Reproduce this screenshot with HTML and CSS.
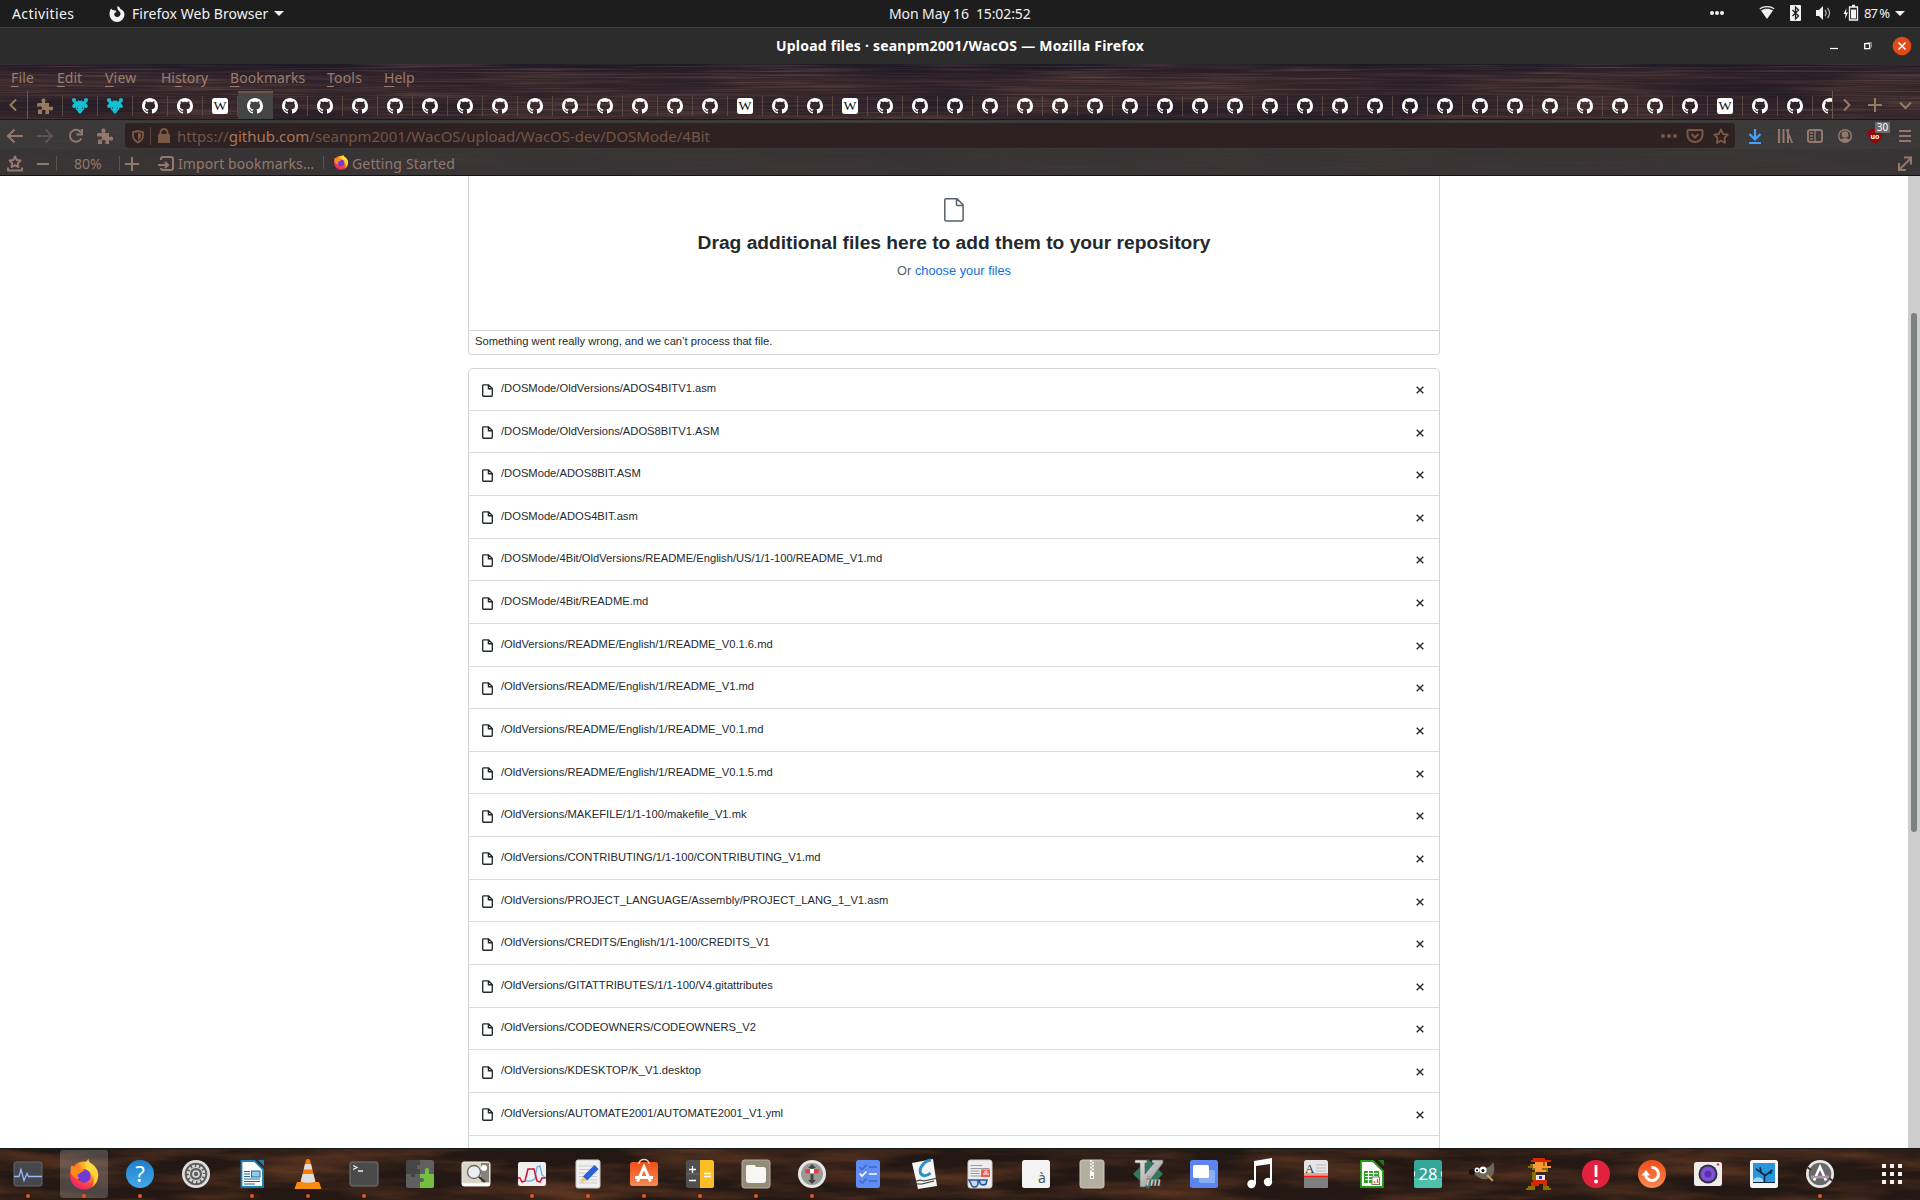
FILE: index.html
```html
<!DOCTYPE html>
<html lang="en">
<head>
<meta charset="utf-8">
<title>Upload files · seanpm2001/WacOS</title>
<link rel="stylesheet" href="styles.css">
</head>
<body>
<svg class="defs" width="0" height="0">
  <defs>
    <symbol id="gh" viewBox="0 0 16 16"><path fill="#fff" d="M8 0C3.58 0 0 3.58 0 8c0 3.54 2.29 6.53 5.47 7.59.4.07.55-.17.55-.38 0-.19-.01-.82-.01-1.49-2.01.37-2.53-.49-2.69-.94-.09-.23-.48-.94-.82-1.13-.28-.15-.68-.52-.01-.53.63-.01 1.08.58 1.23.82.72 1.21 1.87.87 2.33.66.07-.52.28-.87.51-1.07-1.78-.2-3.64-.89-3.64-3.95 0-.87.31-1.59.82-2.15-.08-.2-.36-1.02.08-2.12 0 0 .67-.21 2.2.82.64-.18 1.32-.27 2-.27.68 0 1.36.09 2 .27 1.53-1.04 2.2-.82 2.2-.82.44 1.1.16 1.92.08 2.12.51.56.82 1.27.82 2.15 0 3.07-1.87 3.75-3.65 3.95.29.25.54.73.54 1.48 0 1.07-.01 1.93-.01 2.2 0 .21.15.46.55.38A8.013 8.013 0 0016 8c0-4.42-3.58-8-8-8z"/></symbol>
    <symbol id="wk" viewBox="0 0 16 16"><rect width="16" height="16" rx="2.500" fill="#fff"/><text x="8" y="12.400" text-anchor="middle" font-style="normal" font-family="Liberation Serif, serif" font-size="13" textLength="13" lengthAdjust="spacingAndGlyphs" fill="#111">W</text></symbol>
    <symbol id="pz" viewBox="0 0 16 16"><path fill="currentColor" d="M1 5h4V3.800a2 2 0 1 1 3 0V5h4v4h1a2 2 0 1 1 0 3h-1v4H8.400v-1.500a1.900 1.900 0 1 0-3.300 0V16H1v-4.500h1.500a1.700 1.700 0 1 0 0-3H0V6z"/></symbol>
    <symbol id="cy" viewBox="0 0 16 16"><path fill="#13c0d3" d="M0 1l2-1 2 1-.2 2L6 3.500 6.500 2 8 3l1.500-1 .5 1.500L12.200 3 12 1l2-1 2 1-.3 2.500-2 1.500 1.300 1.500L16 8l-1 2-2.500-.5-.5 2.200-1.500 1-.5 1.300L8 16l-2-2-.5-1.300-1.500-1-.5-2.200L1 10 0 8l1-1.500L2.300 5l-2-1.500z"/><path fill="#3a262a" d="M6.200 8.500l-1.400 2.200.8.400zM9.800 8.500l1.400 2.200-.8.400z"/></symbol>
    <symbol id="ff" viewBox="0 0 32 32">
      <circle cx="16" cy="17.500" r="14" fill="url(#ffo)"/>
      <path fill="#ffd83a" d="M17 9c0-4 1.500-6.500 3.500-8 .3 3 3 5 4.500 7 3.500 1.500 5.500 5.500 5.300 10-.3 5-3 9-6.800 11.500 3-4 3-9 1-12.500C23 13 19 13 17 9z" opacity=".85"/>
      <circle cx="16" cy="18" r="6.800" fill="#7339d8"/>
      <path fill="#ff8a1c" d="M3 8c1.500-.5 2.500 0 3.500 1.500L8 7.500c1 1.500 2 2.500 4.500 2.800 1.500.3 2.500 1 4 2.700-3 0-4 2.500-6 3-1.500.5-1 3 1 4.500-4 1-8-3-9-6z"/>
    </symbol>
    <symbol id="file" viewBox="0 0 11 13"><path fill="none" stroke="currentColor" stroke-width="1.350" d="M1.500.8h5.100l3.700 3.700v6.900a.8.8 0 0 1-.8.8h-8a.8.8 0 0 1-.8-.8V1.600a.8.8 0 0 1 .8-.8zM6.400 1v3.700h3.700"/></symbol>
    <symbol id="x" viewBox="0 0 8 8"><path fill="none" stroke="#24292e" stroke-width="1.400" d="M.7.7l6.600 6.600M7.300.7L.7 7.300"/></symbol>
    <radialGradient id="ffo" cx=".75" cy=".15" r="1"><stop offset="0" stop-color="#fff14a"/><stop offset=".35" stop-color="#ffa51f"/><stop offset=".65" stop-color="#ff4a3c"/><stop offset="1" stop-color="#e6167c"/></radialGradient>
    <linearGradient id="blu" x2="0" y2="1"><stop offset="0" stop-color="#1c7fcd"/><stop offset="1" stop-color="#45a8e8"/></linearGradient>
    <linearGradient id="org" x2="0" y2="1"><stop offset="0" stop-color="#f04e1a"/><stop offset="1" stop-color="#f88a50"/></linearGradient>
    <linearGradient id="met" x2="1" y2="1"><stop offset="0" stop-color="#e8e8e8"/><stop offset="1" stop-color="#8d8d8d"/></linearGradient>
    <filter id="grain" x="0" y="0" width="100%" height="100%" color-interpolation-filters="sRGB"><feTurbulence type="fractalNoise" baseFrequency=".008 .6" numOctaves="3" seed="4"/><feColorMatrix values="0 0 0 0 .58  0 0 0 0 .42  0 0 0 0 .4  .9 0 0 0 -.37"/></filter>
    <filter id="stain" x="0" y="0" width="100%" height="100%" color-interpolation-filters="sRGB"><feTurbulence type="fractalNoise" baseFrequency=".006 .03" numOctaves="2" seed="9"/><feColorMatrix values="0 0 0 0 .1  0 0 0 0 .08  0 0 0 0 .13  1.800 0 0 0 -.75"/></filter>
    <filter id="plank" x="0" y="0" width="100%" height="100%" color-interpolation-filters="sRGB"><feTurbulence type="fractalNoise" baseFrequency=".008 .06" numOctaves="4" seed="12"/><feColorMatrix values="0 0 0 0 .36  0 0 0 0 .21  0 0 0 0 .13  2 0 0 0 -.75"/></filter>
  </defs>
</svg>

<header class="topbar">
  <span class="activities">Activities</span>
  <svg class="appicon" width="16" height="16" viewBox="0 0 16 16"><path fill="#f2f2f2" d="M8.500 0c2 .8 2.500 2 3 3 2.500 1 4 3.200 4 5.500a7.500 7.500 0 0 1-15 0C.5 6 1 4 2.200 2.500L3.500 4 6.500 4.500 7.500 6 5.500 7c-.8 2 .8 4 2.700 4 2.200 0 3.500-1.800 3.300-3.700C11.300 5 7.500 4.500 8.500 0z"/></svg>
  <span class="appname">Firefox Web Browser</span>
  <i class="caret"></i>
  <span class="clock">Mon May 16&nbsp; 15:02:52</span>
  <svg class="tray" width="230" height="27" viewBox="1690 0 230 27">
    <g fill="#f2f2f2"><circle cx="1712" cy="13" r="2"/><circle cx="1717" cy="13" r="2"/><circle cx="1722" cy="13" r="2"/>
    <path d="M1761 10.500l6 8.500 6-8.500c-3.500-2.500-8.500-2.500-12 0z"/><rect x="1790" y="5" width="11" height="16" rx="1"/>
    <path d="M1816 10h3l4-4v14l-4-4h-3zM1846.500 8l-3 6h2l-.5 5 3-6.500h-2z"/><rect x="1851" y="9.500" width="5" height="9"/>
    <path d="M1895 11h10l-5 5z"/></g>
    <g fill="none" stroke="#f2f2f2" stroke-width="1.300"><path d="M1759.800 8.800c4-3 10.400-3 14.400 0"/><path d="M1849.500 7h8v13h-8zM1852 5.500h3"/><path stroke="#aaa" d="M1825 10c1.500 2 1.500 4 0 6M1827.500 8c2.500 3 2.500 7 0 10"/><path stroke="#1d1d1d" d="M1792.500 10l6 6-3 3V7l3 3-6 6"/></g>
    <text x="1864" y="18" fill="#f2f2f2" font-size="13" textLength="26">87 %</text>
  </svg>
</header>

<div class="titlebar">
  <span class="wintitle">Upload files · seanpm2001/WacOS — Mozilla Firefox</span>
  <svg class="winbtns" width="100" height="36" viewBox="1820 27 100 36"><path stroke="#fff" stroke-width="1.200" d="M1830 47.500h8"/><path fill="none" stroke="#fff" stroke-width="1.300" d="M1864.700 42.700h5v5h-5z"/><path fill="none" stroke="#888" d="M1866.500 41.500h5v5"/><circle cx="1902" cy="45" r="9.300" fill="#e24b18"/><path stroke="#fff" stroke-width="1.600" d="M1898.500 41.500l7 7M1905.500 41.500l-7 7"/></svg>
</div>

<div class="chrome">
  <svg class="wood" width="1920" height="113"><rect width="1920" height="113" filter="url(#grain)"/><rect width="1920" height="113" filter="url(#stain)"/></svg>
  <nav class="menubar">
    <span class="m1"><u>F</u>ile</span><span class="m2"><u>E</u>dit</span><span class="m3"><u>V</u>iew</span><span class="m4">Hi<u>s</u>tory</span><span class="m5"><u>B</u>ookmarks</span><span class="m6"><u>T</u>ools</span><span class="m7"><u>H</u>elp</span>
  </nav>
  <div class="tabstrip">
    <svg class="scroll-l" width="27" height="28" viewBox="0 0 27 28"><path class="ln" d="M16 8.500l-5.500 5.500 5.500 5.500"/></svg>
    <div class="tabs">
      <i class="tab"><svg><use href="#pz"/></svg></i>
      <i class="tab"><svg><use href="#cy"/></svg></i>
      <i class="tab"><svg><use href="#cy"/></svg></i>
      <i class="tab"><svg><use href="#gh"/></svg></i>
      <i class="tab"><svg><use href="#gh"/></svg></i>
      <i class="tab"><svg><use href="#wk"/></svg></i>
      <i class="tab active"><svg><use href="#gh"/></svg></i>
      <i class="tab"><svg><use href="#gh"/></svg></i>
      <i class="tab"><svg><use href="#gh"/></svg></i>
      <i class="tab"><svg><use href="#gh"/></svg></i>
      <i class="tab"><svg><use href="#gh"/></svg></i>
      <i class="tab"><svg><use href="#gh"/></svg></i>
      <i class="tab"><svg><use href="#gh"/></svg></i>
      <i class="tab"><svg><use href="#gh"/></svg></i>
      <i class="tab"><svg><use href="#gh"/></svg></i>
      <i class="tab"><svg><use href="#gh"/></svg></i>
      <i class="tab"><svg><use href="#gh"/></svg></i>
      <i class="tab"><svg><use href="#gh"/></svg></i>
      <i class="tab"><svg><use href="#gh"/></svg></i>
      <i class="tab"><svg><use href="#gh"/></svg></i>
      <i class="tab"><svg><use href="#wk"/></svg></i>
      <i class="tab"><svg><use href="#gh"/></svg></i>
      <i class="tab"><svg><use href="#gh"/></svg></i>
      <i class="tab"><svg><use href="#wk"/></svg></i>
      <i class="tab"><svg><use href="#gh"/></svg></i>
      <i class="tab"><svg><use href="#gh"/></svg></i>
      <i class="tab"><svg><use href="#gh"/></svg></i>
      <i class="tab"><svg><use href="#gh"/></svg></i>
      <i class="tab"><svg><use href="#gh"/></svg></i>
      <i class="tab"><svg><use href="#gh"/></svg></i>
      <i class="tab"><svg><use href="#gh"/></svg></i>
      <i class="tab"><svg><use href="#gh"/></svg></i>
      <i class="tab"><svg><use href="#gh"/></svg></i>
      <i class="tab"><svg><use href="#gh"/></svg></i>
      <i class="tab"><svg><use href="#gh"/></svg></i>
      <i class="tab"><svg><use href="#gh"/></svg></i>
      <i class="tab"><svg><use href="#gh"/></svg></i>
      <i class="tab"><svg><use href="#gh"/></svg></i>
      <i class="tab"><svg><use href="#gh"/></svg></i>
      <i class="tab"><svg><use href="#gh"/></svg></i>
      <i class="tab"><svg><use href="#gh"/></svg></i>
      <i class="tab"><svg><use href="#gh"/></svg></i>
      <i class="tab"><svg><use href="#gh"/></svg></i>
      <i class="tab"><svg><use href="#gh"/></svg></i>
      <i class="tab"><svg><use href="#gh"/></svg></i>
      <i class="tab"><svg><use href="#gh"/></svg></i>
      <i class="tab"><svg><use href="#gh"/></svg></i>
      <i class="tab"><svg><use href="#gh"/></svg></i>
      <i class="tab"><svg><use href="#wk"/></svg></i>
      <i class="tab"><svg><use href="#gh"/></svg></i>
      <i class="tab"><svg><use href="#gh"/></svg></i>
      <i class="tab"><svg><use href="#gh"/></svg></i>
    </div>
    <svg width="87" height="28" viewBox="0 0 87 28"><path class="ln" d="M11 8.500l5.500 5.500-5.500 5.500M42 7v14M35 14h14M67 11.500l5.500 5.500 5.500-5.500"/></svg>
  </div>
  <div class="navbar">
    <svg width="125" height="30" viewBox="0 0 125 30"><path class="lp" d="M8 16h15M14.500 9.500L8 16l6.500 6.500"/><path class="lp dim" d="M37 16h15M45.500 9.500L52 16l-6.500 6.500"/><path class="lp" d="M81 12.500a6 6 0 1 0 .3 6M82 9v5.500h-5.500"/><svg class="pink" x="97" y="8" width="16" height="16"><use href="#pz"/></svg></svg>
    <div class="urlbar">
      <svg width="50" height="24" viewBox="125 124 50 24"><path fill="none" stroke="#7a5947" stroke-width="1.800" d="M138 131l-5 1.200v3.300c0 3 2 5.500 5 6.800 3-1.300 5-3.800 5-6.800v-3.300z"/><path fill="#7a5947" d="M138 133v7c2-1 3-2.500 3-4.500v-2z"/><path stroke="#5b4038" d="M150.500 127v18"/><rect x="158" y="134" width="12" height="9" rx="1" fill="#7a5947"/><path fill="none" stroke="#7a5947" stroke-width="2" d="M160.500 135v-2.500a3.500 3.500 0 0 1 7 0v2.500"/></svg>
      <span class="url">https://<b>github.com</b>/seanpm2001/WacOS/upload/WacOS-dev/DOSMode/4Bit</span>
      <svg width="80" height="24" viewBox="1655 124 80 24"><g fill="#7a5947"><circle cx="1663" cy="136" r="2"/><circle cx="1669" cy="136" r="2"/><circle cx="1675" cy="136" r="2"/></g><g fill="none" stroke="#7a5947" stroke-width="2"><path d="M1688.500 130h13a1 1 0 0 1 1 1v4a7.500 7 0 0 1-15 0v-4a1 1 0 0 1 1-1z"/><path d="M1691.500 134l3.500 3.500 3.500-3.500"/><path stroke-linejoin="round" stroke-width="1.800" d="M1721 129.500l2.100 4.500 4.700.6-3.400 3.400.8 4.900-4.200-2.300-4.200 2.300.8-4.900-3.400-3.400 4.700-.6z"/></g></svg>
    </div>
    <svg width="185" height="30" viewBox="1735 120 185 30">
      <path fill="none" stroke="#45a1ff" stroke-width="2.200" d="M1755 129v10.500M1749.500 134l5.500 5.500 5.500-5.500M1749 143h12"/>
      <g fill="none" stroke="#94786c" stroke-width="2"><path d="M1779 129v14M1783.500 129v14M1788 129v14" /><path stroke-width="1.700" d="M1786.500 129.500l5.800 13.500"/><rect x="1808" y="130" width="14" height="12" rx="2"/><path d="M1815 130v12M1810 133h3M1810 136h3M1810 139h3" stroke-width="1.400"/><circle cx="1845" cy="136" r="6.300" stroke-width="1.500"/><path d="M1899 131h12M1899 136h12M1899 141h12"/></g>
      <circle cx="1845" cy="134.500" r="3.300" fill="#94786c"/><path fill="#94786c" d="M1840 140c2-2.500 8-2.500 10 0-2.500 3-7.500 3-10 0z"/>
      <path fill="#8a0a10" d="M1875 128l7 2v5c0 4-3 7-7 9-4-2-7-5-7-9v-5z"/><text x="1875" y="138.500" fill="#fff" font-size="7" font-weight="700" text-anchor="middle">uo</text>
      <rect x="1875" y="122" width="15" height="11" rx="1" fill="#6d6d6d"/><text x="1882.500" y="131.300" fill="#fff" font-size="10" text-anchor="middle">30</text>
    </svg>
  </div>
  <div class="bookmarks">
    <svg width="66" height="27" viewBox="0 149 66 27"><path class="lp" stroke-linejoin="round" d="M15 156.500l1.700 3.500 3.800.5-2.700 2.700.6 3.800-3.400-1.800-3.400 1.800.6-3.800-2.700-2.700 3.800-.5zM8 167.500v3h14v-3M37 164h12"/><path stroke="#5e514d" d="M56.500 156v15"/></svg>
    <span class="zoom">80%</span>
    <svg width="66" height="27" viewBox="112 149 66 27"><path stroke="#5e514d" d="M119.500 156v15"/><path class="lp" d="M125 164h14M132 157v14M161 160v-1a2 2 0 0 1 2-2h8a2 2 0 0 1 2 2v9a2 2 0 0 1-2 2h-8a2 2 0 0 1-2-2M158 165h10M165 162l3 3-3 3"/></svg>
    <span class="imp">Import bookmarks…</span>
    <i class="bsep"></i>
    <svg class="bff" width="16" height="16"><use href="#ff"/></svg>
    <span class="get">Getting Started</span>
    <svg class="expand" width="30" height="27" viewBox="1890 149 30 27"><path class="lp" d="M1899 170l12-12M1904 157.500h7v7M1899 163v7h7"/></svg>
  </div>
</div>

<main class="viewport">
  <div class="page">
    <section class="drop">
      <svg class="bigfile" width="20" height="24" viewBox="0 0 20 24"><path fill="none" stroke="#586069" stroke-width="1.500" d="M2 .8h11l6.100 6.100v14.900a1.300 1.300 0 0 1-1.300 1.300H2A1.300 1.300 0 0 1 .8 21.800V2A1.300 1.300 0 0 1 2 .8zM12.500 1v5.300a1.200 1.200 0 0 0 1.200 1.200H19"/></svg>
      <h2>Drag additional files here to add them to your repository</h2>
      <p>Or <a>choose your files</a></p>
    </section>
    <div class="error">Something went really wrong, and we can’t process that file.</div>
    <div class="files">
      <div class="row"><svg class="fi"><use href="#file"/></svg><span>/DOSMode/OldVersions/ADOS4BITV1.asm</span><svg class="rm"><use href="#x"/></svg></div>
      <div class="row"><svg class="fi"><use href="#file"/></svg><span>/DOSMode/OldVersions/ADOS8BITV1.ASM</span><svg class="rm"><use href="#x"/></svg></div>
      <div class="row"><svg class="fi"><use href="#file"/></svg><span>/DOSMode/ADOS8BIT.ASM</span><svg class="rm"><use href="#x"/></svg></div>
      <div class="row"><svg class="fi"><use href="#file"/></svg><span>/DOSMode/ADOS4BIT.asm</span><svg class="rm"><use href="#x"/></svg></div>
      <div class="row"><svg class="fi"><use href="#file"/></svg><span>/DOSMode/4Bit/OldVersions/README/English/US/1/1-100/README_V1.md</span><svg class="rm"><use href="#x"/></svg></div>
      <div class="row"><svg class="fi"><use href="#file"/></svg><span>/DOSMode/4Bit/README.md</span><svg class="rm"><use href="#x"/></svg></div>
      <div class="row"><svg class="fi"><use href="#file"/></svg><span>/OldVersions/README/English/1/README_V0.1.6.md</span><svg class="rm"><use href="#x"/></svg></div>
      <div class="row"><svg class="fi"><use href="#file"/></svg><span>/OldVersions/README/English/1/README_V1.md</span><svg class="rm"><use href="#x"/></svg></div>
      <div class="row"><svg class="fi"><use href="#file"/></svg><span>/OldVersions/README/English/1/README_V0.1.md</span><svg class="rm"><use href="#x"/></svg></div>
      <div class="row"><svg class="fi"><use href="#file"/></svg><span>/OldVersions/README/English/1/README_V0.1.5.md</span><svg class="rm"><use href="#x"/></svg></div>
      <div class="row"><svg class="fi"><use href="#file"/></svg><span>/OldVersions/MAKEFILE/1/1-100/makefile_V1.mk</span><svg class="rm"><use href="#x"/></svg></div>
      <div class="row"><svg class="fi"><use href="#file"/></svg><span>/OldVersions/CONTRIBUTING/1/1-100/CONTRIBUTING_V1.md</span><svg class="rm"><use href="#x"/></svg></div>
      <div class="row"><svg class="fi"><use href="#file"/></svg><span>/OldVersions/PROJECT_LANGUAGE/Assembly/PROJECT_LANG_1_V1.asm</span><svg class="rm"><use href="#x"/></svg></div>
      <div class="row"><svg class="fi"><use href="#file"/></svg><span>/OldVersions/CREDITS/English/1/1-100/CREDITS_V1</span><svg class="rm"><use href="#x"/></svg></div>
      <div class="row"><svg class="fi"><use href="#file"/></svg><span>/OldVersions/GITATTRIBUTES/1/1-100/V4.gitattributes</span><svg class="rm"><use href="#x"/></svg></div>
      <div class="row"><svg class="fi"><use href="#file"/></svg><span>/OldVersions/CODEOWNERS/CODEOWNERS_V2</span><svg class="rm"><use href="#x"/></svg></div>
      <div class="row"><svg class="fi"><use href="#file"/></svg><span>/OldVersions/KDESKTOP/K_V1.desktop</span><svg class="rm"><use href="#x"/></svg></div>
      <div class="row"><svg class="fi"><use href="#file"/></svg><span>/OldVersions/AUTOMATE2001/AUTOMATE2001_V1.yml</span><svg class="rm"><use href="#x"/></svg></div>
      <div class="row"></div>
    </div>
  </div>
  <div class="scrollbar"><i class="thumb"></i></div>
</main>

<footer class="dock">
  <svg class="wood" width="1920" height="52"><rect width="1920" height="52" filter="url(#plank)"/></svg>
  <i class="app run"><svg viewBox="0 0 32 32"><rect x="2" y="4" width="28" height="24" rx="2" fill="#45474c" stroke="#666"/><path d="M2 18.500h5l2-7 3 11 3-7 1.500 3H30" fill="none" stroke="#9db6ff" stroke-width="1.300"/></svg></i>
  <i class="app run focus"><svg viewBox="0 0 32 32"><use href="#ff"/></svg></i>
  <i class="app run"><svg viewBox="0 0 32 32"><circle cx="16" cy="16" r="14" fill="url(#blu)"/><text x="16" y="23.500" text-anchor="middle" font-size="22" fill="#fff">?</text></svg></i>
  <i class="app"><svg viewBox="0 0 32 32"><circle cx="16" cy="16" r="14" fill="#dedede"/><circle cx="16" cy="16" r="11.300" fill="#5e5e5e"/><circle cx="16" cy="16" r="8" fill="none" stroke="#ddd" stroke-width="2.500" stroke-dasharray="2.600 1.600"/><circle cx="16" cy="16" r="6.500" fill="#5e5e5e" stroke="#ddd"/><circle cx="16" cy="16" r="3" fill="none" stroke="#ddd" stroke-width="1.600"/></svg></i>
  <i class="app run"><svg viewBox="0 0 32 32"><path fill="#fff" stroke="#1b80b5" stroke-width="1.800" d="M5.500 3h13L27 11.500V29H5.500z"/><path fill="#1b80b5" d="M22 2h6v6z"/><path stroke="#156a98" stroke-width="1.200" d="M8 13.500h6M8 16h6M8 18.500h6M8 21h16M8 23.500h16M8 26h11"/><rect x="15.500" y="13" width="8.500" height="6" fill="#8ecbe8" stroke="#156a98"/></svg></i>
  <i class="app run"><svg viewBox="0 0 32 32"><path fill="#f78d0f" d="M5 24h22l2.500 7h-27z"/><path fill="#fb7a06" d="M14 2c.5-1.500 3.500-1.500 4 0l5.500 22c-2 2-13 2-15 0z"/><path fill="#dedede" d="M13 6h6l1.300 5.500h-8.600zM10.600 16h10.800l1.900 7.500c-3 1.700-11.600 1.700-14.600 0z"/></svg></i>
  <i class="app run"><svg viewBox="0 0 32 32"><rect x="2" y="4" width="28" height="24" rx="2" fill="#4a4a4a" stroke="#777"/><path d="M5 7.500l4 2-4 2M10 13h5" fill="none" stroke="#eee" stroke-width="1.300"/></svg></i>
  <i class="app"><svg viewBox="0 0 32 32"><rect x="2" y="2" width="28" height="28" rx="2.500" fill="#5f5f5f"/><path fill="#464646" d="M2 4.500A2.500 2.500 0 0 1 4.500 2H16v5h-3v4h3v5h-5v3H7v-3H2z"/><path fill="#73bf3e" d="M16 16h5v-4a2 2 0 0 1 4 0v4h5v11.500a2.500 2.500 0 0 1-2.500 2.500H16v-6h2a2 2 0 0 0 0-4h-2z"/></svg></i>
  <i class="app"><svg viewBox="0 0 32 32"><rect x="2" y="4" width="28" height="24" rx="2" fill="#d9d6c8" stroke="#efeee6"/><path fill="#85837a" d="M21 5h8v19h-8z"/><circle cx="14" cy="14" r="6.500" fill="#eee" stroke="#666" stroke-width="1.300"/><path stroke="#333" stroke-width="2.200" d="M19 19l6 5"/><circle cx="24" cy="10" r="3" fill="#fff"/><path stroke="#fff" stroke-width="2.500" d="M2 26.500h28"/></svg></i>
  <i class="app run"><svg viewBox="0 0 32 32"><rect x="2" y="4" width="28" height="24" rx="2" fill="#efefef"/><path fill="none" stroke="#71b8ea" stroke-width="1.500" d="M10 23h5l4-2 2-12 3-1 2 9 3 2"/><path fill="none" stroke="#cf1030" stroke-width="1.500" d="M2 20h2l2 4 3-1 3-12h6l3 12 3 1 2-4h4"/></svg></i>
  <i class="app run"><svg viewBox="0 0 32 32"><rect x="4" y="2" width="24" height="28" rx="2" fill="#f0f0f0" stroke="#ccc"/><path stroke="#ccc" d="M7 8h18M7 11.500h18M7 15h18M7 18.500h18M7 22h18M7 25h18"/><path stroke="#2c60d8" stroke-width="6" d="M24.500 9L13 20.500"/><path fill="#eec58e" d="M10.800 18.400l4.200 4.200-7 3z"/></svg></i>
  <i class="app run"><svg viewBox="0 0 32 32"><rect x="2" y="4" width="28" height="24" rx="2.500" fill="url(#org)"/><path fill="none" stroke="#f0d2a6" stroke-width="1.600" d="M11 6c0-6 10-6 10 0"/><path fill="none" stroke="#fff" stroke-width="3" d="M9.500 23.500L16 9l6.500 14.500M7 19.500h18"/></svg></i>
  <i class="app run"><svg viewBox="0 0 32 32"><rect x="2" y="2" width="28" height="28" rx="2.500" fill="#505050"/><path fill="#fbbd25" d="M16 2h11.500A2.500 2.500 0 0 1 30 4.500v23a2.500 2.500 0 0 1-2.500 2.500H16z"/><path stroke="#686868" d="M2 16h14"/><path stroke="#fff" stroke-width="1.300" d="M5 11.500h7M8.500 8v7M5 22.500h7M20 15.500h7M20 18.500h7"/></svg></i>
  <i class="app run"><svg viewBox="0 0 32 32"><rect x="2" y="2" width="28" height="28" rx="2.500" fill="#928b7a" stroke="#b5ae9e"/><path fill="#f7f6f2" d="M8.500 7h6l2 2h7a2.500 2.500 0 0 1 2.500 2.500V22a3 3 0 0 1-3 3H9a3 3 0 0 1-3-3V9a2 2 0 0 1 2.500-2z"/></svg></i>
  <i class="app run"><svg viewBox="0 0 32 32"><circle cx="16" cy="16" r="14" fill="#e6e6e6"/><circle cx="16" cy="16" r="11" fill="#999d96"/><path fill="#444" d="M16 6l4 4h-2.500v12H20l-4 4-4-4h2.500V10H12z"/><rect x="9" y="11" width="14" height="4.500" rx="2" fill="#e33d49"/><rect x="14" y="11" width="4" height="4.500" fill="#fff"/></svg></i>
  <i class="app"><svg viewBox="0 0 32 32"><rect x="4" y="2" width="24" height="28" rx="2.500" fill="#5f8df5"/><path fill="none" stroke="#3d67c9" stroke-width="1.500" d="M7.500 9l2.500 2.500 4.500-4.500M7.500 22.500L10 25l4.500-4.500M17 9h8M17 23h8"/><path fill="none" stroke="#fff" stroke-width="1.700" d="M7.500 15.500L10 18l4.500-4.500M17 16h8"/></svg></i>
  <i class="app"><svg viewBox="0 0 32 32"><path fill="#f5f5f3" d="M4 5l21-4 4 27-19 3z"/><path fill="none" stroke="#2e8fcd" stroke-width="3" d="M23 2c-8 1-12 9-10.500 13 2 4 7 3 10 0"/><path fill="none" stroke="#333" stroke-width="1.200" d="M2 25l10-3 4 1 14-3M4 26l10 0 12-3"/></svg></i>
  <i class="app"><svg viewBox="0 0 32 32"><rect x="4" y="2" width="24" height="28" rx="2.500" fill="#ededed" stroke="#ccc"/><path stroke="#999" d="M6.500 7.500h12M6.500 10.500h19M6.500 13h9M6.500 15.500h9M6.500 18h19"/><rect x="17" y="11.500" width="9" height="7.500" fill="#f05a50"/><path fill="none" stroke="#fff" d="M19 16c4 1 5-3 3-3s-2 4 3 3"/><path fill="#cfd4d8" stroke="#2459a4" stroke-width="1.600" d="M5 22h9v3a3 3 0 0 1-7 1zM15 22h8l-1 4c-3 2-6 0-6-1zM14 22.500h2"/></svg></i>
  <i class="app"><svg viewBox="0 0 32 32"><rect x="2" y="2" width="28" height="28" rx="2.500" fill="#f3f3f3"/><text x="22" y="25" text-anchor="middle" font-size="14" fill="#555">à</text></svg></i>
  <i class="app"><svg viewBox="0 0 32 32"><rect x="4" y="2" width="24" height="28" rx="2.500" fill="#b5af9f" stroke="#cfc9bb"/><path stroke="#f5f5f2" stroke-width="2" stroke-dasharray="1.700 1.700" d="M15 2v13"/><path stroke="#f5f5f2" stroke-width="2" stroke-dasharray="1.700 1.700" stroke-dashoffset="1.700" d="M17 2v13"/><rect x="14" y="14" width="4" height="7" fill="#fff"/><circle cx="16" cy="19" r="1" fill="#777"/></svg></i>
  <i class="app"><svg viewBox="0 0 32 32"><path fill="#2f7a5b" d="M16 1l15 15-15 15L1 16z"/><path fill="url(#met)" stroke="#555" stroke-width=".6" d="M3 2h12v3h-2v11l9-11h-2V2h11v3L13 29h-5V5H3z"/><text x="14" y="28" font-size="14" font-style="italic" font-weight="700" font-family="Liberation Serif, serif" fill="#ddd" stroke="#333" stroke-width=".3">im</text></svg></i>
  <i class="app"><svg viewBox="0 0 32 32"><rect x="2" y="2" width="28" height="28" rx="2.500" fill="#5c85f1"/><rect x="11" y="12" width="16" height="13" rx="1.500" fill="#8badf8"/><rect x="5" y="7" width="16" height="13" rx="1.500" fill="#fff"/></svg></i>
  <i class="app"><svg viewBox="0 0 32 32"><path fill="#fff" d="M10 3l18-3v24h-2V6l-14 2v18h-2z"/><circle cx="7.500" cy="26" r="4.200" fill="#fff"/><circle cx="24" cy="24" r="4.200" fill="#fff"/></svg></i>
  <i class="app"><svg viewBox="0 0 32 32"><rect x="4" y="2" width="24" height="28" rx="2.500" fill="#e5e5e5"/><path fill="#7f7f7f" d="M4 19h24v8.500a2.500 2.500 0 0 1-2.500 2.500h-19A2.500 2.500 0 0 1 4 27.500z"/><text x="5" y="15" font-size="13" font-family="Liberation Serif, serif" fill="#333">A</text><path stroke="#bbb" d="M16 7h10M16 10h10M16 13h10"/><path stroke="#ee9a96" stroke-width="3" d="M4 16.500h24"/><path stroke="#f01c10" stroke-width="1.500" d="M4 18.500h24"/></svg></i>
  <i class="app"><svg viewBox="0 0 32 32"><path fill="#fff" stroke="#1f9b16" stroke-width="1.800" d="M5 3h12l10 10v16H5z"/><path fill="#167a0e" d="M22 2h6v6z"/><rect x="8" y="13" width="15" height="12" fill="#2aa31e"/><path stroke="#fff" stroke-width="1.200" d="M9 15.500h13M9 18.500h13M9 21.500h13M12.500 13v12M17.500 13v12"/><rect x="16" y="19" width="7.500" height="7.500" fill="#fff" stroke="#777"/><path stroke="#e06a20" stroke-width="1.500" d="M18.500 25v-2M21.500 25v-4"/></svg></i>
  <i class="app"><svg viewBox="0 0 32 32"><rect x="2" y="2" width="28" height="28" rx="2.500" fill="#33a698"/><path fill="#4cc2ab" d="M2 20h28v7.500a2.500 2.500 0 0 1-2.500 2.500h-23A2.500 2.500 0 0 1 2 27.500z"/><text x="16" y="22" text-anchor="middle" font-size="16.500" fill="#fff">28</text><path stroke="#fff" d="M2.500 13.500v5M29.500 13.500v5"/></svg></i>
  <i class="app"><svg viewBox="0 0 32 32"><path fill="#6c6758" d="M5 14c2-3 7-4 11-4 4 0 8-3 9-6 2 5 2 11-2 15-5 4-11 3-18-4z"/><circle cx="4" cy="14" r="3" fill="#111"/><circle cx="9" cy="12" r="2.500" fill="#fff"/><circle cx="15" cy="12" r="3.600" fill="#fff"/><circle cx="15" cy="12.500" r="1.500" fill="#111"/><circle cx="9" cy="12.300" r="1.100" fill="#111"/><path stroke="#d9a35a" stroke-width="1.800" d="M19 17l6 6"/><path stroke="#222" stroke-width="2.500" d="M25 23l4 4"/></svg></i>
  <i class="app"><svg viewBox="0 0 32 32" shape-rendering="crispEdges"><path fill="#d82800" d="M9 0h12v2h6v2H7V2h2zM9 22h14v6h-4v-2h-4v2H7v-4h2z"/><path fill="#8a7000" d="M6 6h5v4h2v2H8v-2H4V8h2zM8 14h4v8H8zM18 12h6v2h-6zM2 32v-2h2v-2h7v4zM19 28h6v2h2v2h-8z"/><path fill="#fc9838" d="M11 4h12v4h4v2h-5v4H11v-4H9V6h2z"/><path fill="#8a7000" d="M19 4h2v4h-2zM18 10h6v2h-6z"/><path fill="#e8e8e8" d="M12 17h9v5h-9z"/><path fill="#3030d0" d="M15 18h3v3h-3z"/></svg></i>
  <i class="app"><svg viewBox="0 0 32 32"><circle cx="16" cy="16" r="14" fill="#e2213f"/><path stroke="#fff" stroke-width="2.800" d="M16 7v12"/><circle cx="16" cy="23.500" r="1.900" fill="#fff"/></svg></i>
  <i class="app"><svg viewBox="0 0 32 32"><circle cx="16" cy="16" r="14" fill="url(#org)"/><path fill="none" stroke="#fff" stroke-width="3" d="M15.500 9.500a6.500 6.500 0 1 1-6 7"/><path fill="#fff" d="M5.500 17.500L10 12l4 5.500z"/></svg></i>
  <i class="app"><svg viewBox="0 0 32 32"><rect x="2" y="4" width="28" height="24" rx="2.500" fill="#ededed"/><circle cx="16" cy="16" r="9.500" fill="#32303a"/><circle cx="16" cy="16" r="7.500" fill="#8050d8"/><circle cx="16" cy="16" r="3.500" fill="#5c2fb0"/><circle cx="26" cy="6.500" r="1.200" fill="#e33"/></svg></i>
  <i class="app"><svg viewBox="0 0 32 32"><rect x="2" y="2" width="28" height="28" rx="2.500" fill="#f6f6f6"/><rect x="5" y="5" width="22" height="20" fill="#2796dc"/><path fill="#9ed6f5" d="M5 22a6 6 0 0 1 11 3H5z"/><path fill="none" stroke="#0c2a44" stroke-width="1.600" d="M16.500 25v-8L8 11M16.500 18l8-6M13 14l-1-5M20 15l4 0"/><path stroke="#0c2a44" d="M5 24.500h22"/></svg></i>
  <i class="app run"><svg viewBox="0 0 32 32"><circle cx="16" cy="16" r="14" fill="#e8e8e8"/><circle cx="16" cy="16" r="11.300" fill="#686868"/><path fill="none" stroke="#fff" stroke-width="2.600" d="M10 22.500L16 9l6 13.500"/><path stroke="#ddd" stroke-width="2.400" d="M7 19h18"/><path stroke="#8d4b7e" d="M7 19h18"/><path stroke="#4a3026" stroke-width="2" d="M3 9l4 3M29 23l-4-3"/></svg></i>
  <i class="app grid"><svg viewBox="0 0 32 32"><path fill="#f2f2f2" d="M6 6h4v4H6zM14 6h4v4h-4zM22 6h4v4h-4zM6 14h4v4H6zM14 14h4v4h-4zM22 14h4v4h-4zM6 22h4v4H6zM14 22h4v4h-4zM22 22h4v4h-4z"/></svg></i>
</footer>
</body>
</html>
```

FILE: styles.css
```css
* { box-sizing: border-box; }
body {
  margin: 0;
  width: 1920px;
  height: 1200px;
  overflow: hidden;
  display: flex;
  flex-direction: column;
  font-family: "Noto Sans", "Open Sans", sans-serif;
  font-size: 14px;
  background: #fff;
}
.defs { position: absolute; }
svg { display: block; flex: none; }
span { white-space: nowrap; }
i { font-style: normal; }

.topbar {
  height: 27px;
  background: #1d1d1d;
  color: #f2f2f2;
  display: flex;
  align-items: center;
  position: relative;
}
.activities { width: 97px; padding-left: 12px; letter-spacing: .4px; }
.appicon { margin-left: 12px; }
.appname { width: 136px; margin-left: 7px; letter-spacing: .05px; }
.caret { margin-left: 6px; border: 5px solid transparent; border-top-color: #f2f2f2; border-bottom: 0; }
.clock { margin-left: 605px; letter-spacing: -.1px; }
.tray { margin-left: auto; }

.titlebar {
  height: 37px;
  background: #2c2c2c;
  border-top: 1px solid #3c3c3c;
  display: flex;
  align-items: center;
  color: #fff;
}
.wintitle { width: 1820px; padding: 0 0 2px 100px; text-align: center; font-weight: 700; letter-spacing: .22px; }

.chrome {
  height: 112px;
  background: linear-gradient(#211b28, #35262a 14px, #35272a 56px);
  position: relative;
  display: flex;
  flex-direction: column;
  overflow: hidden;
}
.wood { position: absolute; left: 0; top: 0; }
.chrome > div, .chrome > nav { position: relative; }
.menubar { height: 27px; display: flex; align-items: center; color: #9a7d6e; padding-left: 11px; }
.menubar u { text-underline-offset: 3px; text-decoration-thickness: 1px; }
.m1 { width: 46px; letter-spacing: .2px; } .m2 { width: 48px; } .m3 { width: 56px; letter-spacing: .2px; } .m4 { width: 69px; }
.m5 { width: 97px; letter-spacing: .1px; } .m6 { width: 57px; letter-spacing: .2px; }

.tabstrip { height: 28px; display: flex; }
.tabs { width: 1806px; border: solid #6b5a50; border-width: 0 1px; display: flex; overflow: hidden; }
.tab { width: 35px; height: 28px; flex: none; display: flex; align-items: center; padding: 2px 0 0 9px; color: #957c60; background: linear-gradient(#5a4940, #5a4940) no-repeat 34px 5px / 1px 20px; }
.tab svg { width: 16px; height: 16px; }
.tab.active { background: #454545; border-top: 2px solid #6e5645; padding-top: 0; }
.ln { fill: none; stroke: #957c60; stroke-width: 2; }
.lp { fill: none; stroke: #94786c; stroke-width: 2; }
.dim { opacity: .4; }
.pink { color: #94786c; }

.navbar { height: 30px; background: rgba(60, 60, 60, .86); border-top: 1px solid #1c191b; display: flex; align-items: center; }
.urlbar { width: 1610px; height: 25px; margin-top: 2px; background: rgba(46, 32, 32, .94); border-radius: 3px; display: flex; align-items: center; }
.url { width: 1480px; padding-left: 2px; font-size: 15px; color: #725548; }
.url b { font-weight: 400; color: #a8775a; }
.bookmarks { height: 27px; background: rgba(57, 55, 55, .88); border-bottom: 1px solid #171014; display: flex; align-items: center; color: #94786c; }
.bookmarks span { padding-top: 2px; }
.zoom { width: 46px; padding-left: 8px; }
.imp { width: 145px; letter-spacing: .1px; }
.get { letter-spacing: .15px; }
.bsep { width: 1px; height: 13px; background: #5e514d; }
.bff { margin: 0 3px 0 9px; }
.expand { margin-left: auto; }

.viewport { height: 972px; display: flex; background: #fff; }
.page { width: 1908px; padding-left: 468px; font-family: "Liberation Sans", Arial, sans-serif; color: #24292e; overflow: hidden; }
.drop { width: 972px; height: 154px; border: solid #d1d5da; border-width: 0 1px; display: flex; flex-direction: column; align-items: center; }
.bigfile { margin-top: 22px; }
h2 { margin: 9px 0 0; font-size: 19.2px; line-height: 24px; font-weight: 700; }
p { margin: 8px 0 0; font-size: 12.8px; line-height: 16px; color: #586069; }
a { color: #1070dd; }
.error { width: 972px; height: 25px; border: 1px solid #d1d5da; border-radius: 0 0 3px 3px; font-size: 11.2px; line-height: 20px; padding-left: 6px; }
.files { width: 972px; margin-top: 13px; border: 1px solid #d1d5da; border-radius: 5px 5px 0 0; }
.row { height: 42.65px; border-bottom: 1px solid #d9dde1; display: flex; align-items: center; font-size: 11.2px; padding: 0 15px 0 13px; }
.row:first-child { height: 41.7px; }
.fi { width: 11px; height: 13px; margin: 2px 8px 0 0; }
.row span { padding-bottom: 2px; }
.rm { width: 8px; height: 8px; margin: 2px 0 0 auto; }
.scrollbar { width: 12px; background: #cdcdcd; padding: 137px 0 0 3px; }
.thumb { display: block; width: 6px; height: 519px; border-radius: 3px; background: #7b8080; }

.dock { height: 52px; background: #231814; border-top: 1px solid #151b19; display: flex; position: relative; padding-left: 4px; }
.app { width: 48px; height: 48px; margin: 1px 8px 0 0; border-radius: 3px; position: relative; display: flex; flex: none; padding: 8px; }
.app svg { width: 32px; height: 32px; }
.focus { background: rgba(255, 255, 255, .2); }
.run::after { content: ""; position: absolute; left: 22px; top: 44px; width: 4px; height: 4px; border-radius: 50%; background: #e95420; }
.grid { margin-left: 16px; }
```
